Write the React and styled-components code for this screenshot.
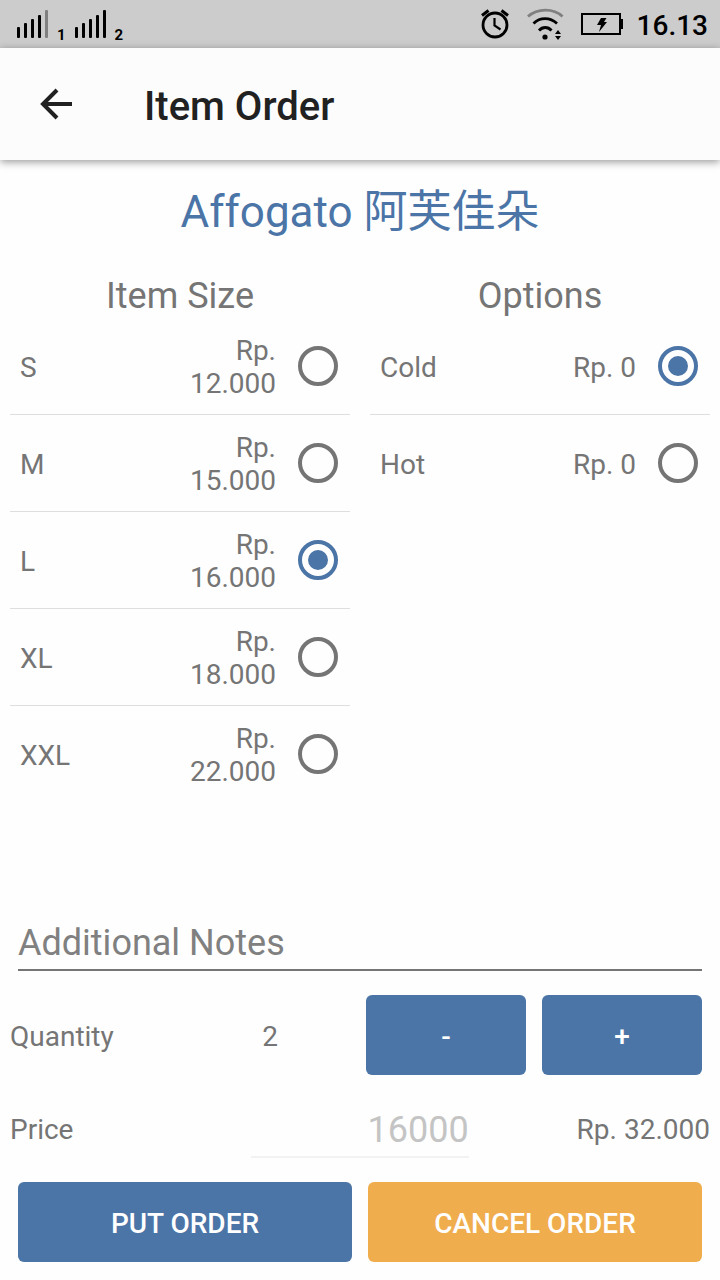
import React, { useState } from "react";
import styled, { createGlobalStyle, ThemeProvider } from "styled-components";

const theme = {
  primary: "#4b74a7",
  warning: "#f0ad4e",
  text: "#757575",
  title: "#212121",
  line: "#dedede",
};

const GlobalStyle = createGlobalStyle`
  *, *::before, *::after { box-sizing: border-box; }
  body {
    margin: 0;
    background: #fefefe;
    color: ${theme.text};
    font-family: Roboto, "Noto Sans CJK SC", sans-serif;
    font-size: 28px;
    line-height: 33px;
  }
  button, input { font: inherit; color: inherit; }
`;

const Screen = styled.div`
  display: flex;
  flex-direction: column;
  min-height: 100vh;
`;

const StatusBar = styled.div`
  display: flex;
  align-items: center;
  justify-content: space-between;
  height: 48px;
  padding: 0 12px 0 16px;
  background: #cccccc;
  color: #000;
`;

const StatusGroup = styled.div`
  display: flex;
  align-items: center;
  gap: ${(p) => p.$gap}px;
`;

const SimSlot = styled.span`
  display: flex;
  align-items: flex-end;
  gap: 8px;
  font-size: 15px;
  font-weight: 700;
  line-height: 16px;
  padding-top: 4px;
`;

const SimSignal = styled.svg`
  display: block;
  margin-bottom: 5px;
`;

const Clock = styled.time`
  font-size: 28px;
  font-weight: 500;
  padding-top: 2px;
`;

const AppBar = styled.header`
  display: flex;
  align-items: center;
  gap: 64px;
  height: 112px;
  padding: 0 32px;
  background: #fcfcfc;
  box-shadow: 0 2px 8px rgba(0, 0, 0, 0.4);
`;

const BackButton = styled.button`
  display: flex;
  padding: 0;
  border: 0;
  background: none;
  color: ${(p) => p.theme.title};
  cursor: pointer;
`;

const BarTitle = styled.h1`
  margin: 0;
  padding-top: 6px;
  color: ${(p) => p.theme.title};
  font-size: 40px;
  line-height: 48px;
  font-weight: 500;
`;

const Main = styled.form`
  display: flex;
  flex: 1;
  flex-direction: column;
  padding: 24px 10px 18px;
`;

const ItemName = styled.h2`
  margin: 0;
  color: ${(p) => p.theme.primary};
  font-size: 44px;
  line-height: 56px;
  font-weight: 400;
  text-align: center;
`;

const ChoiceColumns = styled.div`
  display: grid;
  flex: 1;
  grid-template-columns: 1fr 1fr;
  align-items: start;
  gap: 20px;
  padding-top: 34px;
`;

const ChoiceGroup = styled.section`
  min-width: 0;
`;

const GroupTitle = styled.h3`
  margin: 0;
  font-size: 36px;
  line-height: 44px;
  font-weight: 400;
  text-align: center;
`;

const ChoiceRow = styled.label`
  display: grid;
  grid-template-columns: 1fr 120px 40px;
  align-items: center;
  min-height: 97px;
  padding: 0 12px 0 10px;
  border-bottom: 1px solid ${(p) => p.theme.line};
  cursor: pointer;

  &:last-child {
    border-bottom-color: transparent;
  }
`;

const ChoiceName = styled.span`
  padding-top: 2px;
`;

const ChoicePrice = styled.span`
  padding: 2px 22px 0 0;
  text-align: right;
`;

const Radio = styled.input`
  display: grid;
  place-content: center;
  width: 40px;
  height: 40px;
  margin: 0;
  appearance: none;
  border: 4px solid ${(p) => p.theme.text};
  border-radius: 50%;

  &:checked {
    border-color: ${(p) => p.theme.primary};
  }

  &:checked::before {
    content: "";
    width: 20px;
    height: 20px;
    border-radius: 50%;
    background: ${(p) => p.theme.primary};
  }
`;

const NotesInput = styled.input`
  height: 52px;
  margin: 0 8px 24px;
  padding: 0 0 2px;
  border: 0;
  border-bottom: 2px solid ${(p) => p.theme.text};
  border-radius: 0;
  background: none;
  font-size: 36px;
  outline: none;

  &::placeholder {
    color: #808080;
    opacity: 1;
  }
`;

const QuantityRow = styled.div`
  display: grid;
  grid-template-columns: 172fr 176fr 352fr;
  align-items: center;
`;

const QuantityLabel = styled.label`
  padding-top: 2px;
`;

const Quantity = styled.output`
  padding-top: 2px;
  text-align: center;
`;

const PriceRow = styled.div`
  display: grid;
  grid-template-columns: repeat(3, 1fr);
  align-items: center;
  padding: 26px 0 24px;
`;

const UnitPrice = styled.input`
  min-width: 0;
  height: 57px;
  margin: 0 8px;
  padding: 2px 0 0;
  border: 0;
  border-bottom: 2px solid #f2f2f2;
  border-radius: 0;
  background: none;
  color: #c4c4c4;
  font-size: 36px;
  text-align: right;
`;

const Total = styled.output`
  text-align: right;
`;

const ButtonPair = styled.div`
  display: grid;
  grid-template-columns: 1fr 1fr;
  gap: 16px;
  padding: 0 8px;
`;

const Button = styled.button`
  height: 80px;
  padding: 2px 0 0;
  border: 0;
  border-radius: 6px;
  background: ${(p) => p.theme[p.$tone]};
  color: #fff;
  font-weight: 500;
  text-transform: uppercase;
  cursor: pointer;
`;

const BAR_TOPS = [17, 13, 9, 5, 0];

function Sim({ slot, level }) {
  return (
    <SimSlot>
      <SimSignal width="33" height="28" viewBox="0 0 33 28" aria-hidden="true">
        {BAR_TOPS.map((top, i) => (
          <rect
            key={top}
            x={1 + i * 7}
            y={top}
            width="3"
            height={28 - top}
            rx="1"
            fill={i < level ? "#000" : "#808080"}
          />
        ))}
      </SimSignal>
      {slot}
    </SimSlot>
  );
}

function AlarmIcon() {
  return (
    <svg width="32" height="30" viewBox="0 0 32 30" fill="none" stroke="#000" aria-hidden="true">
      <circle cx="14" cy="16" r="12" strokeWidth="2.8" />
      <path d="M1 6.500 7.500 1.500M27 6.500 20.500 1.500" strokeWidth="3" />
      <path d="M13.500 9v7.500l6 4" strokeWidth="2.200" />
    </svg>
  );
}

function WifiIcon() {
  return (
    <svg width="38" height="32" viewBox="0 0 38 32" fill="none" strokeWidth="2.8" aria-hidden="true">
      <path d="M1 8.500C10.500 0 26.500 0 35.500 8.500" stroke="#808080" />
      <path d="M6.500 15.500c6.500-6.500 16.500-6.500 23.500 0" stroke="#000" />
      <path d="M12 22.500c3.500-4 9-4 12.500 0" stroke="#000" />
      <circle cx="18" cy="29" r="2.600" fill="#000" />
      <path d="M31 22l3 4h-6zM31 32l3-4h-6z" fill="#000" />
    </svg>
  );
}

function BatteryIcon() {
  return (
    <svg width="44" height="22" viewBox="-2 0 44 22" aria-hidden="true">
      <rect x="1" y="1" width="38" height="20" fill="none" stroke="#000" strokeWidth="2" />
      <path d="M39 6h3v10h-3z" />
      <path d="M20 5h5.500l-2.500 4h3l-8 10 2-7h-4z" />
    </svg>
  );
}

function BackArrow() {
  return (
    <svg width="48" height="48" viewBox="0 0 48 48" fill="none" stroke="currentColor" aria-hidden="true">
      <path d="M40 24H11" strokeWidth="4" />
      <path d="M25 10 11 24l14 14" strokeWidth="4" />
    </svg>
  );
}

const SIZES = [
  { name: "S", price: 12000 },
  { name: "M", price: 15000 },
  { name: "L", price: 16000 },
  { name: "XL", price: 18000 },
  { name: "XXL", price: 22000 },
];

const OPTIONS = [
  { name: "Cold", price: 0 },
  { name: "Hot", price: 0 },
];

const rupiah = (n) => "Rp. " + String(n).replace(/\B(?=(\d{3})+$)/g, ".");

function Choices({ title, group, items, value, onChange }) {
  return (
    <ChoiceGroup role="radiogroup" aria-label={title}>
      <GroupTitle>{title}</GroupTitle>
      {items.map((item) => (
        <ChoiceRow key={item.name}>
          <ChoiceName>{item.name}</ChoiceName>
          <ChoicePrice>{rupiah(item.price)}</ChoicePrice>
          <Radio
            type="radio"
            name={group}
            checked={value === item.name}
            onChange={() => onChange(item.name)}
          />
        </ChoiceRow>
      ))}
    </ChoiceGroup>
  );
}

export default function App() {
  const [size, setSize] = useState("L");
  const [option, setOption] = useState("Cold");
  const [quantity, setQuantity] = useState(2);
  const unit =
    SIZES.find((s) => s.name === size).price +
    OPTIONS.find((o) => o.name === option).price;

  return (
    <ThemeProvider theme={theme}>
      <GlobalStyle />
      <Screen>
        <StatusBar>
          <StatusGroup $gap={8}>
            <Sim slot="1" level={4} />
            <Sim slot="2" level={5} />
          </StatusGroup>
          <StatusGroup $gap={14}>
            <AlarmIcon />
            <WifiIcon />
            <BatteryIcon />
            <Clock>16.13</Clock>
          </StatusGroup>
        </StatusBar>
        <AppBar>
          <BackButton type="button" aria-label="Back">
            <BackArrow />
          </BackButton>
          <BarTitle>Item Order</BarTitle>
        </AppBar>
        <Main onSubmit={(e) => e.preventDefault()}>
          <ItemName>Affogato 阿芙佳朵</ItemName>
          <ChoiceColumns>
            <Choices title="Item Size" group="size" items={SIZES} value={size} onChange={setSize} />
            <Choices title="Options" group="option" items={OPTIONS} value={option} onChange={setOption} />
          </ChoiceColumns>
          <NotesInput placeholder="Additional Notes" aria-label="Additional Notes" />
          <QuantityRow>
            <QuantityLabel htmlFor="quantity">Quantity</QuantityLabel>
            <Quantity id="quantity">{quantity}</Quantity>
            <ButtonPair>
              <Button type="button" $tone="primary" onClick={() => setQuantity(Math.max(1, quantity - 1))}>
                -
              </Button>
              <Button type="button" $tone="primary" onClick={() => setQuantity(quantity + 1)}>
                +
              </Button>
            </ButtonPair>
          </QuantityRow>
          <PriceRow>
            <label htmlFor="unit-price">Price</label>
            <UnitPrice id="unit-price" value={unit} disabled readOnly />
            <Total>{rupiah(unit * quantity)}</Total>
          </PriceRow>
          <ButtonPair>
            <Button type="submit" $tone="primary">Put Order</Button>
            <Button type="button" $tone="warning">Cancel Order</Button>
          </ButtonPair>
        </Main>
      </Screen>
    </ThemeProvider>
  );
}
